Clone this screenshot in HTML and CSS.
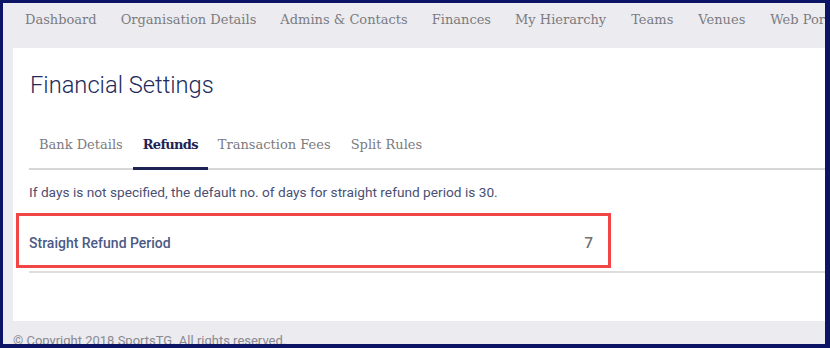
FILE: index.html
```html
<!DOCTYPE html>
<html>
<head>
<meta charset="utf-8">
<link rel="stylesheet" href="styles.css">
</head>
<body>
<div class="frame">
  <div class="page">
    <nav class="topnav">
      <span class="nav-item">Dashboard</span>
      <span class="nav-item">Organisation Details</span>
      <span class="nav-item">Admins &amp; Contacts</span>
      <span class="nav-item">Finances</span>
      <span class="nav-item">My Hierarchy</span>
      <span class="nav-item">Teams</span>
      <span class="nav-item">Venues</span>
      <span class="nav-item">Web Portal</span>
      <span class="nav-item">Reports</span>
    </nav>
    <main class="panel">
      <h1 class="title">Financial Settings</h1>
      <div class="tabs">
        <span class="tab">Bank Details</span>
        <span class="tab active">Refunds</span>
        <span class="tab">Transaction Fees</span>
        <span class="tab">Split Rules</span>
      </div>
      <p class="info">If days is not specified, the default no. of days for straight refund period is 30.</p>
      <div class="row">
        <span class="row-label">Straight Refund Period</span>
        <span class="row-value">7</span>
        <div class="highlight"></div>
      </div>
    </main>
    <footer class="footer">© Copyright 2018 SportsTG. All rights reserved.</footer>
  </div>
</div>
</body>
</html>
```
FILE: styles.css
```css
html, body {
  margin: 0;
  padding: 0;
  background: #0c1466;
}
.frame {
  width: 830px;
  height: 348px;
  box-sizing: border-box;
  border-style: solid;
  border-color: #0c1466;
  border-width: 3px 5px 4px 3px;
  background: #ecebf0;
  overflow: hidden;
}
.page {
  width: 1100px;
  font-family: Roboto, "Liberation Sans", sans-serif;
}
.topnav {
  height: 45px;
  display: flex;
  align-items: flex-start;
  gap: 24px;
  padding-left: 22px;
  padding-top: 8px;
  box-sizing: border-box;
  font-family: "DejaVu Serif", serif;
  font-size: 13px;
  line-height: 18px;
  color: #7b7b80;
  white-space: nowrap;
}
.nav-item:nth-child(n+6) {
  margin-left: 1px;
}
.panel {
  margin-left: 10px;
  height: 273px;
  background: #ffffff;
  padding: 0 0 0 16px;
  box-sizing: border-box;
  display: flow-root;
}
.title {
  margin: 0;
  padding-top: 22px;
  padding-left: 1px;
  font-weight: 300;
  font-size: 23.7px;
  line-height: 30px;
  color: #222a5c;
}
.tabs {
  margin-top: 27px;
  display: flex;
  gap: 20px;
  padding-left: 10px;
  border-bottom: 2px solid #d7d7d9;
  height: 43px;
  box-sizing: border-box;
  font-family: "DejaVu Serif", serif;
  font-size: 13px;
  color: #7b7b80;
}
.tab {
  position: relative;
  line-height: 20px;
  padding-top: 8px;
  white-space: nowrap;
}
.tab.active {
  font-weight: bold;
  letter-spacing: -0.7px;
  color: #1d2354;
}
.tab.active::after {
  content: "";
  position: absolute;
  left: -10px;
  right: -10px;
  bottom: -2px;
  height: 3px;
  background: #1d2354;
}
.info {
  margin: 12px 0 0 0;
  font-size: 13.7px;
  line-height: 20px;
  color: #4b4f73;
}
.row {
  position: relative;
  width: 798px;
  height: 60px;
  box-sizing: border-box;
  margin-top: 11px;
  border-bottom: 2px solid #dedede;
  display: flex;
  align-items: center;
  padding-right: 234px;
  padding-top: 2px;
  justify-content: space-between;
}
.row-label {
  font-weight: 500;
  font-size: 14px;
  color: #4b5a86;
}
.row-value {
  font-size: 15px;
  font-weight: 500;
  color: #6f6f74;
}
.highlight {
  position: absolute;
  left: -13px;
  top: 0;
  width: 595px;
  height: 55px;
  box-sizing: border-box;
  border: 3px solid #f24545;
}
.footer {
  padding: 12px 0 0 10px;
  font-size: 13px;
  color: #8a8a90;
  white-space: nowrap;
}
```
